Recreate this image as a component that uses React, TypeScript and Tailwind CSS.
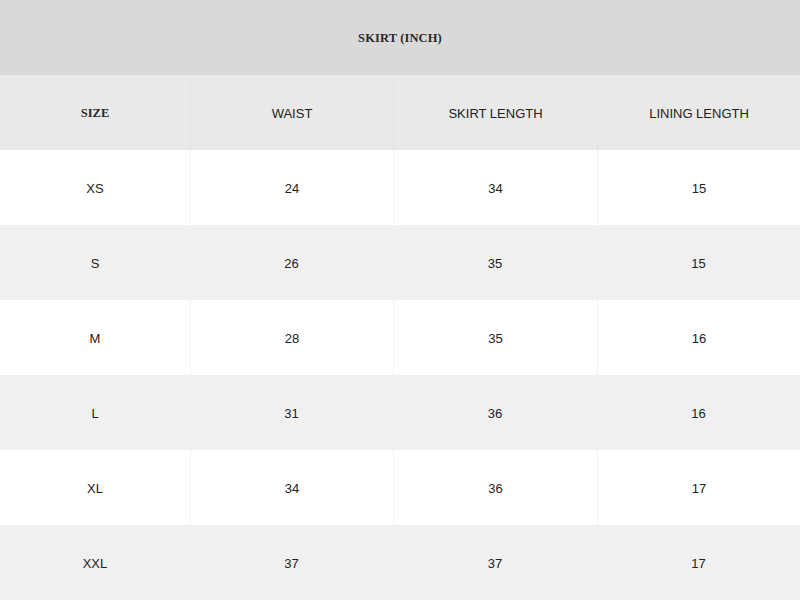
const COLUMNS = ["SIZE", "WAIST", "SKIRT LENGTH", "LINING LENGTH"];

const ROWS: [string, number, number, number][] = [
  ["XS", 24, 34, 15],
  ["S", 26, 35, 15],
  ["M", 28, 35, 16],
  ["L", 31, 36, 16],
  ["XL", 34, 36, 17],
  ["XXL", 37, 37, 17],
];

const GRID = "grid grid-cols-[190px_203px_204px_203px]";

export default function App() {
  return (
    <div className="w-[800px] h-[600px] flex flex-col bg-white text-[#222] font-['Liberation_Sans',sans-serif]">
      {/* Title */}
      <div className="h-[75px] flex items-center justify-center pt-[2px] bg-[#d9d9d9] font-['Liberation_Serif',serif] font-bold text-[12.5px] tracking-[0.01em] text-[#2a2a2a]">
        SKIRT (INCH)
      </div>

      {/* Header */}
      <div className={`${GRID} h-[75px] bg-[#e9e9e9]`}>
        {COLUMNS.map((col, i) => (
          <div
            key={col}
            className={
              i === 0
                ? "flex items-center justify-center pt-[2px] font-['Liberation_Serif',serif] font-bold text-[12.5px] text-[#2a2a2a]"
                : "flex items-center justify-center pt-[2px] border-l border-[#e4e4e4] text-[13px]"
            }
          >
            {col}
          </div>
        ))}
      </div>

      {/* Rows */}
      {ROWS.map((row, r) => (
        <div
          key={row[0]}
          className={`${GRID} h-[75px] ${r % 2 === 0 ? "bg-white" : "bg-[#f0f0f0]"}`}
        >
          {row.map((cell, i) => (
            <div
              key={i}
              className={
                i === 0
                  ? "flex items-center justify-center pt-[2px] text-[13px]"
                  : r % 2 === 0
                  ? "flex items-center justify-center pt-[2px] border-l border-[#f2f2f2] text-[13px]"
                  : "flex items-center justify-center pt-[2px] text-[13px]"
              }
            >
              {cell}
            </div>
          ))}
        </div>
      ))}
    </div>
  );
}
